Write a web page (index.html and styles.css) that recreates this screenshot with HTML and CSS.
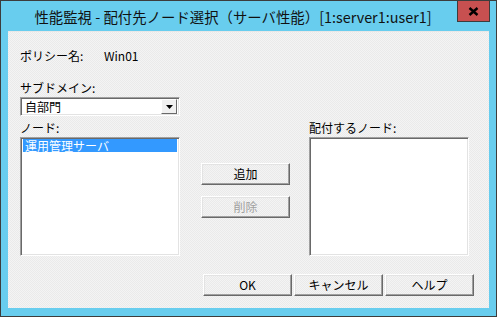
FILE: index.html
```html
<!DOCTYPE html>
<html lang="ja">
<head>
  <meta charset="UTF-8">
  <title>性能監視 - 配付先ノード選択</title>
  <link rel="stylesheet" href="styles.css">
</head>
<body>
  <div class="window">
    <div class="titlebar">
      <div class="title">性能監視 - 配付先ノード選択（サーバ性能）[1:server1:user1]</div>
      <div class="close">
        <svg width="11" height="9" viewBox="0 0 11 9"><path d="M1.5 1 L9.5 8 M9.5 1 L1.5 8" stroke="#000" stroke-width="2.4"/></svg>
      </div>
    </div>

    <div class="client">
      <div class="policy">
        <span class="policy-label">ポリシー名:</span>
        <span>Win01</span>
      </div>

      <div class="label subdomain-label">サブドメイン:</div>
      <div class="combo">
        <span class="combo-text">自部門</span>
        <span class="combo-btn">
          <svg width="7" height="4" viewBox="0 0 7 4"><path d="M0 0 H7 L3.5 4 Z" fill="#000"/></svg>
        </span>
      </div>

      <div class="main">
        <div class="column">
          <div class="label">ノード:</div>
          <ul class="listbox">
            <li class="selected">運用管理サーバ</li>
          </ul>
        </div>

        <div class="actions">
          <button class="btn">追加</button>
          <button class="btn" disabled>削除</button>
        </div>

        <div class="column">
          <div class="label">配付するノード:</div>
          <ul class="listbox"></ul>
        </div>
      </div>

      <div class="footer">
        <button class="btn">OK</button>
        <button class="btn">キャンセル</button>
        <button class="btn">ヘルプ</button>
      </div>
    </div>
  </div>
</body>
</html>
```

FILE: styles.css
```css
* {
  margin: 0;
  padding: 0;
  box-sizing: border-box;
}

body {
  font-family: "Noto Sans CJK JP", "DejaVu Sans", sans-serif;
  font-size: 12px;
  color: #000;
  background: #fff;
}

.window {
  width: 497px;
  height: 317px;
  border: 1px solid #3c3c3c;
  background: #68cdee;
  display: flex;
  flex-direction: column;
}

.titlebar {
  height: 30px;
  display: flex;
  padding-right: 6px;
}

.title {
  flex: 1;
  text-align: center;
  font-size: 14.4px;
  line-height: 18px;
  padding-top: 7px;
  padding-left: 8px;
  color: #111;
  white-space: nowrap;
}

.close {
  width: 33px;
  height: 21px;
  background: #c75050;
  border: 1px solid #3c3c3c;
  border-top: none;
  display: flex;
  justify-content: center;
  align-items: center;
}

/* client area with the light dither of the classic dialog */
.client {
  flex: 1;
  margin: 0 7px 8px 7px;
  padding: 17px 15px 0 12px;
  background: repeating-conic-gradient(#f4f4f4 0 25%, #eaeaea 0 50%) 0 0 / 2px 2px;
  border-top: 1px solid #e8e8e8;
}

.label,
.policy {
  line-height: 14px;
  height: 14px;
}

.policy {
  display: flex;
}

.policy-label {
  width: 84px;
}

.subdomain-label {
  margin-top: 18px;
}

.combo {
  margin-top: 2px;
  width: 160px;
  height: 19px;
  background: #fff;
  border: 1px solid;
  border-color: #a0a0a0 #fff #fff #a0a0a0;
  box-shadow: inset 1px 1px #696969, inset -1px -1px #e3e3e3;
  display: flex;
  align-items: center;
  padding: 2px 2px 2px 4px;
}

.combo-text {
  flex: 1;
  line-height: 14px;
}

.combo-btn {
  width: 16px;
  height: 15px;
  background: #f0f0f0;
  border: 1px solid;
  border-color: #fff #696969 #696969 #fff;
  display: flex;
  justify-content: center;
  align-items: center;
}

.main {
  display: flex;
  margin-top: 5px;
}

.column {
  width: 160px;
  display: flex;
  flex-direction: column;
  gap: 2px;
}

.listbox {
  list-style: none;
  height: 119px;
  background: #fff;
  border: 1px solid;
  border-color: #a0a0a0 #fff #fff #a0a0a0;
  box-shadow: inset 1px 1px #696969, inset -1px -1px #e3e3e3;
  padding: 1px 2px 2px 2px;
}

.listbox li {
  line-height: 13px;
  height: 13px;
  padding-left: 2px;
}

.listbox .selected {
  background: #3399ff;
  color: #fff;
}

.actions {
  width: 89px;
  margin: 42px 19px 0 21px;
  display: flex;
  flex-direction: column;
  gap: 11px;
}

.btn {
  font-family: inherit;
  font-size: 12px;
  color: #000;
  width: 89px;
  height: 22px;
  line-height: 14px;
  background: repeating-conic-gradient(#f4f4f4 0 25%, #eaeaea 0 50%) 0 0 / 2px 2px;
  border: 1px solid;
  border-color: #fff #696969 #696969 #fff;
  box-shadow: inset -1px -1px #a0a0a0, inset 1px 1px #e3e3e3;
}

.btn:disabled {
  color: #a0a0a0;
}

.footer {
  display: flex;
  justify-content: flex-end;
  gap: 2px;
  margin-top: 18px;
}

.footer .btn {
  width: 89px;
}
```
